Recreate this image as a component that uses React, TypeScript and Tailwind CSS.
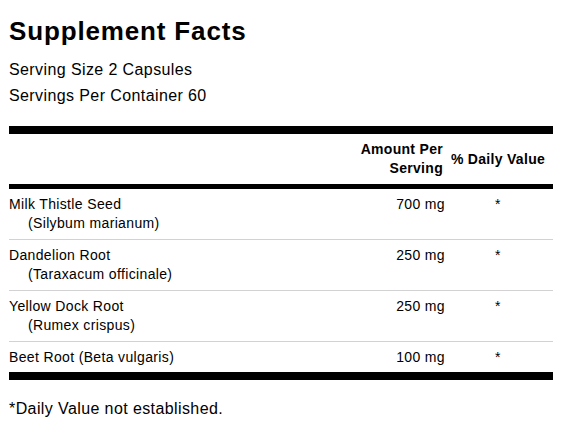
import React from "react";

const rows = [
  { name: "Milk Thistle Seed", sub: "(Silybum marianum)", amt: "700 mg" },
  { name: "Dandelion Root", sub: "(Taraxacum officinale)", amt: "250 mg" },
  { name: "Yellow Dock Root", sub: "(Rumex crispus)", amt: "250 mg" },
  { name: "Beet Root (Beta vulgaris)", sub: "", amt: "100 mg" },
];

export default function App() {
  return (
    <div className="w-[561px] h-[443px] bg-white text-black px-[9px] pt-[16px] font-['Liberation_Sans',Arial,sans-serif]">
      <h1 className="text-[26px] leading-[30px] font-bold tracking-[0.85px]">Supplement Facts</h1>
      <div className="mt-[11px] text-[16px] leading-[26px] tracking-[0.4px]">
        <div>Serving Size 2 Capsules</div>
        <div>Servings Per Container 60</div>
      </div>
      <div className="mt-[17px] w-[544px] border-t-[8px] border-b-[8px] border-black text-[14px] leading-[19px] tracking-[0.35px]">
        <div className="flex items-center py-[6px] border-b-[5px] border-black font-bold tracking-[0.3px]">
          <div className="flex-1" />
          <div className="w-[100px] pr-[2px] text-right">Amount Per Serving</div>
          <div className="w-[108px] pl-[5px] pr-[7px] text-center whitespace-nowrap">% Daily Value</div>
        </div>
        {rows.map((r, i) => (
          <div
            key={r.name}
            className={
              i < rows.length - 1
                ? "flex items-start pt-[6px] pb-[6px] border-b border-[#d2d2d2]"
                : "flex items-start pt-[6px] pb-[5px]"
            }
          >
            <div className="flex-1">
              <div>{r.name}</div>
              {r.sub && <div className="pl-[19px]">{r.sub}</div>}
            </div>
            <div className="w-[100px] pr-[0px] text-right">{r.amt}</div>
            <div className="w-[108px] pl-[6px] pr-[8px] text-center">*</div>
          </div>
        ))}
      </div>
      <div className="mt-[17px] text-[16px] leading-[24px] tracking-[0.4px]">*Daily Value not established.</div>
    </div>
  );
}
